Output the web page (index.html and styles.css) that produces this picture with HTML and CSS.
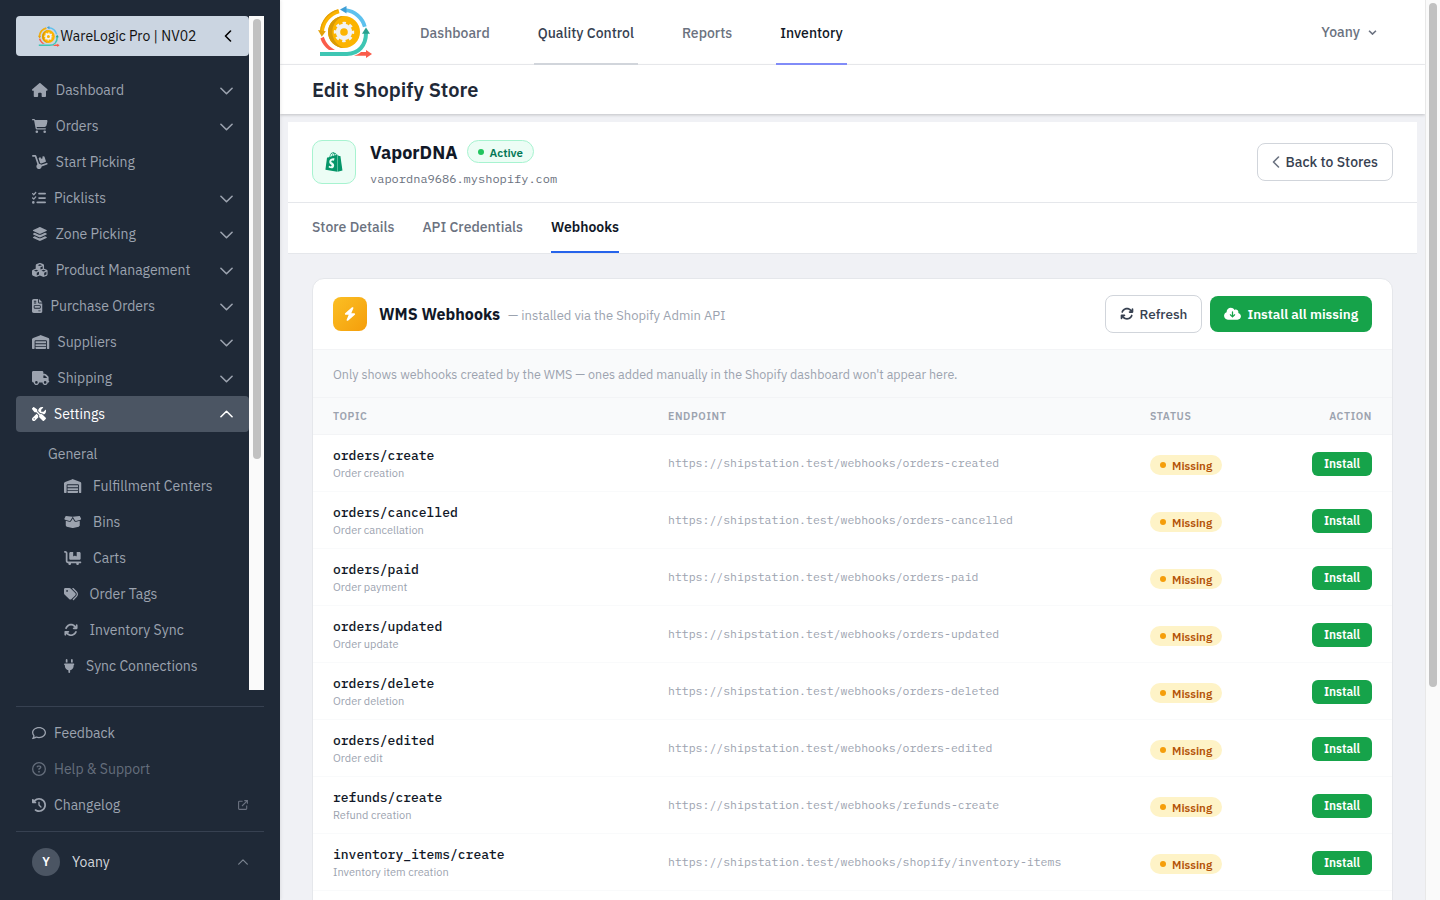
FILE: index.html
```html
<!DOCTYPE html>
<html lang="en">
<head>
    <meta charset="UTF-8">
    <title>Edit Shopify Store</title>
    <link rel="stylesheet" href="styles.css">
</head>
<body>
    <!-- icon sprite -->
    <svg class="sprite">
        <symbol id="i-house" viewBox="0 0 576 512"><path d="M575.8 255.5c0 18-15 32.1-32 32.1h-32l.7 160.2c0 2.7-.2 5.4-.5 8.1V472c0 22.1-17.9 40-40 40H456c-1.1 0-2.2 0-3.3-.1c-1.4 .1-2.8 .1-4.2 .1H416 392c-22.1 0-40-17.9-40-40V448 384c0-17.7-14.3-32-32-32H256c-17.7 0-32 14.3-32 32v64 24c0 22.1-17.9 40-40 40H160 128.1c-1.5 0-3-.1-4.5-.2c-1.2 .1-2.4 .2-3.6 .2H104c-22.1 0-40-17.9-40-40V360c0-.9 0-1.9 .1-2.8V287.6H32c-18 0-32-14-32-32.1c0-9 3-17 10-24L266.4 8c7-7 15-8 22-8s15 2 21 7L564.8 231.5c8 7 12 15 11 24z"/></symbol>
        <symbol id="i-cart" viewBox="0 0 576 512"><path d="M0 24C0 10.7 10.7 0 24 0H69.5c22 0 41.5 12.8 50.6 32h411c26.3 0 45.5 25 38.6 50.4l-41 152.3c-8.5 31.4-37 53.3-69.5 53.3H170.7l5.4 28.5c2.2 11.3 12.1 19.5 23.6 19.5H488c13.3 0 24 10.7 24 24s-10.7 24-24 24H199.7c-34.6 0-64.3-24.6-70.7-58.5L77.4 54.5c-.7-3.8-4-6.5-7.9-6.5H24C10.7 48 0 37.3 0 24zM128 464a48 48 0 1 1 96 0 48 48 0 1 1 -96 0zm336-48a48 48 0 1 1 0 96 48 48 0 1 1 0-96z"/></symbol>
        <symbol id="i-dolly" viewBox="0 0 576 512"><path d="M0 32C0 14.3 14.3 0 32 0h72.9c27.5 0 52 17.6 60.7 43.8L257.7 320c30.1 .5 56.8 14.9 74 37l202.1-67.4c16.8-5.6 34.9 3.5 40.5 20.2s-3.5 34.9-20.2 40.5L352 417.7c-.9 52.2-43.5 94.3-96 94.3c-53 0-96-43-96-96c0-30.8 14.5-58.2 37-75.8L104.9 64H32C14.3 64 0 49.7 0 32zM244.8 134.5c-5.5-16.8 3.7-34.9 20.5-40.3L311 79.4l19.8 60.9 60.9-19.8L371.8 59.6l45.7-14.8c16.8-5.5 34.9 3.7 40.3 20.5l49.4 152.2c5.5 16.8-3.7 34.9-20.5 40.3L334.5 307.2c-16.8 5.5-34.9-3.7-40.3-20.5L244.8 134.5z"/></symbol>
        <symbol id="i-list" viewBox="0 0 512 512"><path d="M152.1 38.2c9.9 8.9 10.7 24 1.8 33.9l-72 80c-4.4 4.9-10.6 7.8-17.2 7.9s-12.9-2.4-17.6-7L7 113C-2.3 103.6-2.3 88.4 7 79s24.6-9.4 33.9 0l22.1 22.1 55.1-61.2c8.9-9.9 24-10.7 33.9-1.8zm0 160c9.9 8.9 10.7 24 1.8 33.9l-72 80c-4.4 4.9-10.6 7.8-17.2 7.9s-12.9-2.4-17.6-7L7 273c-9.4-9.4-9.4-24.6 0-33.9s24.6-9.4 33.9 0l22.1 22.1 55.1-61.2c8.9-9.9 24-10.7 33.9-1.8zM224 96c0-17.7 14.3-32 32-32H480c17.7 0 32 14.3 32 32s-14.3 32-32 32H256c-17.7 0-32-14.3-32-32zm0 160c0-17.7 14.3-32 32-32H480c17.7 0 32 14.3 32 32s-14.3 32-32 32H256c-17.7 0-32-14.3-32-32zM160 416c0-17.7 14.3-32 32-32H480c17.7 0 32 14.3 32 32s-14.3 32-32 32H192c-17.7 0-32-14.3-32-32zM48 368a48 48 0 1 1 0 96 48 48 0 1 1 0-96z"/></symbol>
        <symbol id="i-layers" viewBox="0 0 576 512"><path d="M264.5 5.2c14.9-6.9 32.1-6.9 47 0l218.6 101c8.5 3.9 13.9 12.4 13.9 21.8s-5.4 17.9-13.9 21.8l-218.6 101c-14.9 6.9-32.1 6.9-47 0L45.9 149.8C37.4 145.8 32 137.3 32 128s5.4-17.9 13.9-21.8L264.5 5.2zM476.9 209.6l53.2 24.6c8.5 3.9 13.9 12.4 13.9 21.8s-5.4 17.9-13.9 21.8l-218.6 101c-14.9 6.9-32.1 6.9-47 0L45.9 277.8C37.4 273.8 32 265.3 32 256s5.4-17.9 13.9-21.8l53.2-24.6 152 70.2c23.4 10.8 50.4 10.8 73.8 0l152-70.2zm-152 198.2l152-70.2 53.2 24.6c8.5 3.9 13.9 12.4 13.9 21.8s-5.4 17.9-13.9 21.8l-218.6 101c-14.9 6.9-32.1 6.9-47 0L45.9 405.8C37.4 401.8 32 393.3 32 384s5.4-17.9 13.9-21.8l53.2-24.6 152 70.2c23.4 10.8 50.4 10.8 73.8 0z"/></symbol>
        <symbol id="i-cubes" viewBox="0 0 576 512"><path d="M290.8 48.6l78.4 29.7L288 109.5 206.8 78.3l78.4-29.7c1.8-.7 3.8-.7 5.7 0zM136 92.5V204.7c-1.3 .4-2.6 .8-3.9 1.3l-96 36.4C14.4 250.6 0 271.5 0 294.7V413.9c0 22.2 13.1 42.3 33.5 51.3l96 42.2c14.4 6.3 30.7 6.3 45.1 0L288 457.5l113.5 49.9c14.4 6.3 30.7 6.3 45.1 0l96-42.2c20.3-8.9 33.5-29.1 33.5-51.3V294.7c0-23.3-14.4-44.1-36.1-52.4l-96-36.4c-1.3-.5-2.6-.9-3.9-1.3V92.5c0-23.3-14.4-44.1-36.1-52.4l-96-36.4c-12.8-4.8-26.9-4.8-39.7 0l-96 36.4C150.4 48.4 136 69.3 136 92.5zM392 210.6l-82.4 31.2V152.6L392 121v89.6zM154.8 250.9l78.4 29.7L152 311.7 70.8 280.6l78.4-29.7c1.8-.7 3.8-.7 5.7 0zm18.8 204.4V354.8L256 323.2v95.9l-82.4 36.2zM421.2 250.9c1.8-.7 3.8-.7 5.7 0l78.4 29.7L424 311.7l-81.2-31.1 78.4-29.7zM523.2 421.2l-77.6 34.1V354.8L528 323.2v90.7c0 3.2-1.9 6-4.8 7.3z"/></symbol>
        <symbol id="i-invoice" viewBox="0 0 384 512"><path d="M64 0C28.7 0 0 28.7 0 64V448c0 35.3 28.7 64 64 64H320c35.3 0 64-28.7 64-64V160H256c-17.7 0-32-14.3-32-32V0H64zM256 0V128H384L256 0zM80 64h64c8.8 0 16 7.2 16 16s-7.2 16-16 16H80c-8.8 0-16-7.2-16-16s7.2-16 16-16zm0 64h64c8.8 0 16 7.2 16 16s-7.2 16-16 16H80c-8.8 0-16-7.2-16-16s7.2-16 16-16zm16 96H288c17.7 0 32 14.3 32 32v64c0 17.7-14.3 32-32 32H96c-17.7 0-32-14.3-32-32V256c0-17.7 14.3-32 32-32zm0 32v64H288V256H96zM240 416h64c8.8 0 16 7.2 16 16s-7.2 16-16 16H240c-8.8 0-16-7.2-16-16s7.2-16 16-16z"/></symbol>
        <symbol id="i-warehouse" viewBox="0 0 640 512"><path d="M0 488V171.3c0-26.2 15.9-49.7 40.2-59.4L308.1 4.8c7.6-3.1 16.1-3.1 23.8 0L599.8 111.9c24.3 9.7 40.2 33.3 40.2 59.4V488c0 13.3-10.7 24-24 24H568c-13.3 0-24-10.7-24-24V224c0-17.7-14.3-32-32-32H128c-17.7 0-32 14.3-32 32V488c0 13.3-10.7 24-24 24H24c-13.3 0-24-10.7-24-24zm488 24l-336 0c-13.3 0-24-10.7-24-24V432H512l0 56c0 13.3-10.7 24-24 24zM128 400V336H512v64H128zm0-96V224H512l0 80H128z"/></symbol>
        <symbol id="i-truck" viewBox="0 0 640 512"><path d="M48 0C21.5 0 0 21.5 0 48V368c0 26.5 21.5 48 48 48H64c0 53 43 96 96 96s96-43 96-96H384c0 53 43 96 96 96s96-43 96-96h32c17.7 0 32-14.3 32-32s-14.3-32-32-32V288 256 237.3c0-17-6.7-33.3-18.7-45.3L512 114.7c-12-12-28.3-18.7-45.3-18.7H416V48c0-26.5-21.5-48-48-48H48zM416 160h50.7L544 237.3V256H416V160zM112 416a48 48 0 1 1 96 0 48 48 0 1 1 -96 0zm368-48a48 48 0 1 1 0 96 48 48 0 1 1 0-96z"/></symbol>
        <symbol id="i-tools" viewBox="0 0 512 512"><path d="M78.6 5C69.1-2.4 55.6-1.5 47 7L7 47c-8.5 8.5-9.4 22-2.1 31.6l80 104c4.5 5.9 11.6 9.4 19 9.4h54.1l109 109c-14.7 29-10 65.4 14.3 89.6l112 112c12.5 12.5 32.8 12.5 45.3 0l64-64c12.5-12.5 12.5-32.8 0-45.3l-112-112c-24.2-24.2-60.6-29-89.6-14.3l-109-109V104c0-7.5-3.5-14.5-9.4-19L78.6 5zM19.9 396.1C7.2 408.8 0 426.1 0 444.1C0 481.6 30.4 512 67.9 512c18 0 35.3-7.2 48-19.9L233.7 374.3c-7.8-20.9-9-43.6-3.6-65.1l-61.7-61.7L19.9 396.1zM512 144c0-10.5-1.1-20.7-3.2-30.5c-2.4-11.2-16.1-14.1-24.2-6l-63.9 63.9c-3 3-7.1 4.7-11.3 4.7H352c-8.8 0-16-7.2-16-16V102.6c0-4.2 1.7-8.3 4.7-11.3l63.9-63.9c8.1-8.1 5.2-21.8-6-24.2C388.7 1.1 378.5 0 368 0C288.5 0 224 64.5 224 144l0 .8 85.3 85.3c36-9.1 75.8 .5 104 28.7L429 274.5c49-23 83-72.8 83-130.5zM56 432a24 24 0 1 1 48 0 24 24 0 1 1 -48 0z"/></symbol>
        <symbol id="i-box" viewBox="0 0 640 512"><path d="M58.9 42.1c3-6.1 9.6-9.6 16.3-8.7L320 64 564.8 33.4c6.7-.8 13.3 2.7 16.3 8.7l41.7 83.4c9 17.9-.6 39.6-19.8 45.1L439.6 217.3c-13.9 4-28.8-1.9-36.2-14.3L320 64 236.6 203c-7.4 12.4-22.3 18.3-36.2 14.3L37.1 170.6c-19.3-5.5-28.8-27.2-19.8-45.1L58.9 42.1zM321.1 128l54.9 91.4c14.9 24.8 44.6 36.6 72.5 28.6L576 211.6v167c0 22-15 41.2-36.4 46.6l-204.1 51c-10.2 2.6-20.9 2.6-31 0l-204.1-51C79 419.7 64 400.5 64 378.5v-167L191.6 248c27.8 8 57.6-3.8 72.5-28.6L318.9 128h2.2z"/></symbol>
        <symbol id="i-flatbed" viewBox="0 0 640 512"><path d="M32 0C14.3 0 0 14.3 0 32S14.3 64 32 64H48c8.8 0 16 7.2 16 16V368c0 44.2 35.8 80 80 80h18.7c-1.8 5-2.7 10.4-2.7 16c0 26.5 21.5 48 48 48s48-21.5 48-48c0-5.6-1-11-2.7-16H450.7c-1.8 5-2.7 10.4-2.7 16c0 26.5 21.5 48 48 48s48-21.5 48-48c0-5.6-1-11-2.7-16H608c17.7 0 32-14.3 32-32s-14.3-32-32-32H144c-8.8 0-16-7.2-16-16V80C128 35.8 92.2 0 48 0H32zM192 80V272c0 26.5 21.5 48 48 48H560c26.5 0 48-21.5 48-48V80c0-26.5-21.5-48-48-48H464V176c0 5.9-3.2 11.3-8.5 14.1s-11.5 2.5-16.4-.8L400 163.2l-39.1 26.1c-4.9 3.3-11.2 3.6-16.4 .8s-8.5-8.2-8.5-14.1V32H240c-26.5 0-48 21.5-48 48z"/></symbol>
        <symbol id="i-tags" viewBox="0 0 512 512"><path d="M345 39.1L472.8 168.4c52.4 53 52.4 138.2 0 191.2L360.8 472.9c-9.3 9.4-24.5 9.5-33.9 .2s-9.5-24.5-.2-33.9L438.6 325.9c33.9-34.3 33.9-89.4 0-123.7L310.9 72.9c-9.3-9.4-9.2-24.6 .2-33.9s24.6-9.2 33.9 .2zM0 229.5V80C0 53.5 21.5 32 48 32H197.5c17 0 33.3 6.7 45.3 18.7l168 168c25 25 25 65.5 0 90.5L277.3 442.7c-25 25-65.5 25-90.5 0l-168-168C6.7 262.7 0 246.5 0 229.5zM144 144a32 32 0 1 0 -64 0 32 32 0 1 0 64 0z"/></symbol>
        <symbol id="i-sync" viewBox="0 0 512 512"><path d="M105.1 202.6c7.7-21.8 20.2-42.3 37.8-59.8c62.5-62.5 163.8-62.5 226.3 0L386.3 160H352c-17.7 0-32 14.3-32 32s14.3 32 32 32H463.5c0 0 0 0 0 0h.4c17.7 0 32-14.3 32-32V80c0-17.7-14.3-32-32-32s-32 14.3-32 32v35.2L414.4 97.6c-87.5-87.5-229.3-87.5-316.8 0C73.2 122 55.6 150.7 44.8 181.4c-5.9 16.7 2.9 34.9 19.5 40.8s34.9-2.9 40.8-19.5zM39 289.3c-5 1.5-9.8 4.2-13.7 8.2c-4 4-6.7 8.8-8.1 14c-.3 1.2-.6 2.5-.8 3.8c-.3 1.7-.4 3.4-.4 5.1V432c0 17.7 14.3 32 32 32s32-14.3 32-32V396.9l17.6 17.5 0 0c87.5 87.4 229.3 87.4 316.7 0c24.4-24.4 42.1-53.1 52.9-83.7c5.9-16.7-2.9-34.9-19.5-40.8s-34.9 2.9-40.8 19.5c-7.7 21.8-20.2 42.3-37.8 59.8c-62.5 62.5-163.8 62.5-226.3 0l-.1-.1L125.6 352H160c17.7 0 32-14.3 32-32s-14.3-32-32-32H48.4c-1.6 0-3.2 .1-4.8 .3s-3.1 .5-4.6 1z"/></symbol>
        <symbol id="i-plug" viewBox="0 0 384 512"><path d="M96 0C78.3 0 64 14.3 64 32v96h64V32c0-17.7-14.3-32-32-32zM288 0c-17.7 0-32 14.3-32 32v96h64V32c0-17.7-14.3-32-32-32zM32 160c-17.7 0-32 14.3-32 32s14.3 32 32 32v32c0 77.4 55 142 128 156.8V480c0 17.7 14.3 32 32 32s32-14.3 32-32V412.8C297 398 352 333.4 352 256V224c17.7 0 32-14.3 32-32s-14.3-32-32-32H32z"/></symbol>
        <symbol id="i-comment" viewBox="0 0 512 512"><path d="M123.6 391.3c12.9-9.4 29.6-11.8 44.6-6.4c26.5 9.6 56.2 15.1 87.8 15.1c124.7 0 208-80.5 208-160s-83.3-160-208-160S48 160.5 48 240c0 32 12.4 62.8 35.7 89.2c8.6 9.7 12.8 22.5 11.8 35.5c-1.4 18.1-5.7 34.7-11.3 49.4c17-7.9 31.1-16.7 39.4-22.7zM21.2 431.9c1.8-2.7 3.5-5.4 5.1-8.1c10-16.6 19.5-38.4 21.4-62.9C17.7 326.8 0 285.1 0 240C0 125.1 114.6 32 256 32s256 93.1 256 208s-114.6 208-256 208c-37.1 0-72.3-6.4-104.1-17.9c-11.9 8.7-31.3 20.6-54.3 30.6c-15.1 6.6-32.3 12.6-50.1 16.1c-.8 .2-1.6 .3-2.4 .5c-4.4 .8-8.7 1.5-13.2 1.9c-.2 0-.5 .1-.7 .1c-5.1 .5-10.2 .8-15.3 .8c-6.5 0-12.3-3.9-14.8-9.9c-2.5-6-1.1-12.8 3.4-17.4c4.1-4.2 7.8-8.7 11.3-13.5c1.7-2.3 3.3-4.6 4.8-6.9z"/></symbol>
        <symbol id="i-help" viewBox="0 0 512 512"><path d="M464 256A208 208 0 1 0 48 256a208 208 0 1 0 416 0zM0 256a256 256 0 1 1 512 0A256 256 0 1 1 0 256zm169.8-90.7c7.9-22.3 29.1-37.3 52.8-37.3h58.3c34.9 0 63.1 28.3 63.1 63.1c0 22.6-12.1 43.5-31.7 54.8L280 264.4c-.2 13-10.9 23.6-24 23.6c-13.3 0-24-10.7-24-24V250.5c0-8.6 4.6-16.5 12.1-20.8l44.3-25.4c4.7-2.7 7.6-7.7 7.6-13.1c0-8.4-6.8-15.1-15.1-15.1H222.6c-3.4 0-6.4 2.1-7.5 5.3l-.4 1.2c-4.4 12.5-18.2 19-30.6 14.6s-19-18.2-14.6-30.6l.4-1.2zM224 352a32 32 0 1 1 64 0 32 32 0 1 1 -64 0z"/></symbol>
        <symbol id="i-history" viewBox="0 0 512 512"><path d="M75 75L41 41C25.9 25.9 0 36.6 0 57.9V168c0 13.3 10.7 24 24 24H134.1c21.4 0 32.1-25.9 17-41l-30.8-30.8C155 85.5 203 64 256 64c106 0 192 86 192 192s-86 192-192 192c-40.8 0-78.6-12.7-109.7-34.4c-14.5-10.1-34.4-6.6-44.6 7.9s-6.6 34.4 7.9 44.6C151.2 495 201.7 512 256 512c141.4 0 256-114.6 256-256S397.4 0 256 0C185.3 0 121.3 28.7 75 75zm181 53c-13.3 0-24 10.7-24 24V256c0 6.4 2.5 12.5 7 17l72 72c9.4 9.4 24.6 9.4 33.9 0s9.4-24.6 0-33.9l-65-65V152c0-13.3-10.7-24-24-24z"/></symbol>
        <symbol id="i-bolt" viewBox="0 0 448 512"><path d="M349.4 44.6c5.9-13.7 1.5-29.7-10.6-38.5s-28.6-8-39.9 1.8l-256 224c-10 8.8-13.6 22.9-8.9 35.3S50.7 288 64 288H175.5L98.6 467.4c-5.9 13.7-1.5 29.7 10.6 38.5s28.6 8 39.9-1.8l256-224c10-8.8 13.6-22.9 8.9-35.3s-16.6-20.7-30-20.7H272.5L349.4 44.6z"/></symbol>
        <symbol id="i-cloud" viewBox="0 0 640 512"><path d="M144 480C64.5 480 0 415.5 0 336c0-62.8 40.2-116.2 96.2-135.9c-.1-2.7-.2-5.4-.2-8.1c0-88.4 71.6-160 160-160c59.3 0 111 32.2 138.7 80.2C409.9 102 428.3 96 448 96c53 0 96 43 96 96c0 12.2-2.3 23.8-6.4 34.6C596 238.4 640 290.1 640 352c0 70.7-57.3 128-128 128H144zm79-167l80 80c9.4 9.4 24.6 9.4 33.9 0l80-80c9.4-9.4 9.4-24.6 0-33.9s-24.6-9.4-33.9 0l-39 39V184c0-13.3-10.7-24-24-24s-24 10.7-24 24V318.1l-39-39c-9.4-9.4-24.6-9.4-33.9 0s-9.4 24.6 0 33.9z"/></symbol>
        <symbol id="i-shopify" viewBox="0 0 448 512"><path d="M388.32,104.1a4.66,4.66,0,0,0-4.4-4c-2,0-37.23-.8-37.23-.8s-21.61-20.82-29.62-28.83V503.2L442.76,472S388.72,106.5,388.32,104.1ZM288.65,70.47a116.67,116.67,0,0,0-7.21-17.61C271,32.85,255.42,22,237,22a15,15,0,0,0-4,.4c-.4-.8-1.2-1.2-1.6-2C223.4,11.63,213,7.63,200.58,8c-24,.8-48,18-67.25,48.83-13.61,21.62-24,48.84-26.82,70.06-27.62,8.4-46.83,14.41-47.23,14.81-14,4.4-14.41,4.8-16,18-1.2,10-38,291.82-38,291.82L307.86,504V65.67a41.66,41.66,0,0,0-4.4.4S297.86,67.67,288.65,70.47ZM233.41,87.69c-16,4.8-33.63,10.4-50.84,15.61,4.8-18.82,14.41-37.63,25.62-50,4.4-4.4,10.41-9.61,17.21-12.81C232.21,54.86,233.81,74.48,233.41,87.69ZM200.58,24.44A27.49,27.49,0,0,1,215,28c-6.4,3.2-12.81,8.41-18.81,14.41-15.21,16.42-26.82,42-31.62,66.45-14.42,4.41-28.83,8.81-42,12.81C131.33,83.28,163.75,25.24,200.58,24.44ZM154.15,244.61c1.6,25.61,69.25,31.22,73.25,91.66,2.8,47.64-25.22,80.06-65.65,82.47-48.83,3.2-75.65-25.62-75.65-25.62l10.4-44s26.82,20.42,48.44,18.82c14-.8,19.22-12.41,18.81-20.42-2-33.62-57.24-31.62-60.84-86.86-3.2-46.44,27.22-93.27,94.47-97.68,26-1.6,39.23,4.81,39.23,4.81L221.4,225.39s-17.21-8-37.63-6.4C154.15,221,153.75,239.8,154.15,244.61ZM249.42,82.88c0-12-1.6-29.22-7.21-43.63,18.42,3.6,27.22,24,31.23,36.43Q262.63,78.68,249.42,82.88Z"/></symbol>
        <symbol id="i-down" viewBox="0 0 14 8"><path d="M1 1l6 6 6-6" fill="none" stroke="currentColor" stroke-width="1.7" stroke-linecap="round" stroke-linejoin="round"/></symbol>
        <symbol id="i-down-bold" viewBox="0 0 14 8"><path d="M1.500 1.200l5.500 5.300 5.500-5.300" fill="none" stroke="currentColor" stroke-width="2.600"/></symbol>
        <symbol id="i-up" viewBox="0 0 14 8"><path d="M1 7l6-6 6 6" fill="none" stroke="currentColor" stroke-width="1.7" stroke-linecap="round" stroke-linejoin="round"/></symbol>
        <symbol id="i-left" viewBox="0 0 8 12"><path d="M6.5 1l-5 5 5 5" fill="none" stroke="currentColor" stroke-width="1.6" stroke-linecap="round" stroke-linejoin="round"/></symbol>
        <symbol id="i-external" viewBox="0 0 10 10"><path d="M4.6 1.3H1.4a.8.8 0 0 0-.8.8v6.5c0 .5.4.8.8.8h6.5c.5 0 .8-.3.8-.8V5.6M6.3.6h3.1v3.1M9.2.8L4 6" fill="none" stroke="currentColor" stroke-width="1.1"/></symbol>
        <symbol id="i-logo" viewBox="18 6 55 52">
            <path d="M22 31.500A22.600 22.600 0 0 1 39 11.200" fill="none" stroke="#fcb400" stroke-width="4"/>
            <path d="M20.600 31A24 24 0 0 1 38 9.800" fill="none" stroke="#e3a008" stroke-width="1.200"/>
            <path d="M18 30l7.800 1.200-4 5.600z" fill="#e3a008"/>
            <path d="M45.500 10.200A22.600 22.600 0 0 1 64.800 26.800" fill="none" stroke="#5dc1ee" stroke-width="3.800"/>
            <path d="M40 9.400l6.500-3.400v7.600z" fill="#3f9fd6"/>
            <path d="M20.400 38.400l3.400-1.600C26 43.300 29.600 47 35 50h-6c-4-3-7-6.600-8.600-11.600z" fill="#fa5c4a"/>
            <path d="M54 55.800c2.800-.9 5-2.200 7-3.800h5v-2l6 4-6 4v-2.200z" fill="#fa5c4a"/>
            <path d="M20 54h27C58.500 54 66 45.500 66 33" fill="none" stroke="#3ec6b3" stroke-width="4"/>
            <path d="M62 33.800l4-6.300 4 6.300z" fill="#28a08e"/>
            <circle cx="44" cy="32" r="16" fill="#fcb400"/>
            <path d="M44 16A16 16 0 0 0 44 48A16.800 16.800 0 0 1 44 16z" fill="#d99a06"/>
            <circle cx="44" cy="32" r="6" fill="none" stroke="#f2f2f2" stroke-width="4.400"/>
            <circle cx="44" cy="32" r="8.900" fill="none" stroke="#f2f2f2" stroke-width="2.600" stroke-dasharray="3.400 3.590" stroke-dashoffset="1.700"/>
        </symbol>
    </svg>

    <div class="app">
        <aside class="sidebar">
            <div class="side-scroll">
                <div class="side-content">
                    <div class="brand">
                        <svg class="brand-logo"><use href="#i-logo"/></svg>
                        <span class="brand-name">WareLogic Pro | NV02</span>
                        <svg class="brand-arrow"><use href="#i-left"/></svg>
                    </div>
                    <nav class="menu">
                        <a class="item"><svg class="ic w576"><use href="#i-house"/></svg><span>Dashboard</span><svg class="chev"><use href="#i-down"/></svg></a>
                        <a class="item"><svg class="ic w576"><use href="#i-cart"/></svg><span>Orders</span><svg class="chev"><use href="#i-down"/></svg></a>
                        <a class="item"><svg class="ic w576"><use href="#i-dolly"/></svg><span>Start Picking</span></a>
                        <a class="item"><svg class="ic"><use href="#i-list"/></svg><span>Picklists</span><svg class="chev"><use href="#i-down"/></svg></a>
                        <a class="item"><svg class="ic w576"><use href="#i-layers"/></svg><span>Zone Picking</span><svg class="chev"><use href="#i-down"/></svg></a>
                        <a class="item"><svg class="ic w576"><use href="#i-cubes"/></svg><span>Product Management</span><svg class="chev"><use href="#i-down"/></svg></a>
                        <a class="item"><svg class="ic w384"><use href="#i-invoice"/></svg><span>Purchase Orders</span><svg class="chev"><use href="#i-down"/></svg></a>
                        <a class="item"><svg class="ic w640"><use href="#i-warehouse"/></svg><span>Suppliers</span><svg class="chev"><use href="#i-down"/></svg></a>
                        <a class="item"><svg class="ic w640"><use href="#i-truck"/></svg><span>Shipping</span><svg class="chev"><use href="#i-down"/></svg></a>
                        <a class="item active"><svg class="ic"><use href="#i-tools"/></svg><span>Settings</span><svg class="chev"><use href="#i-up"/></svg></a>
                    </nav>
                    <div class="group">General</div>
                    <nav class="submenu">
                        <a class="item"><svg class="ic w640"><use href="#i-warehouse"/></svg><span>Fulfillment Centers</span></a>
                        <a class="item"><svg class="ic w640"><use href="#i-box"/></svg><span>Bins</span></a>
                        <a class="item"><svg class="ic w640"><use href="#i-flatbed"/></svg><span>Carts</span></a>
                        <a class="item"><svg class="ic"><use href="#i-tags"/></svg><span>Order Tags</span></a>
                        <a class="item"><svg class="ic"><use href="#i-sync"/></svg><span>Inventory Sync</span></a>
                        <a class="item"><svg class="ic w384"><use href="#i-plug"/></svg><span>Sync Connections</span></a>
                    </nav>
                </div>
                <div class="scrollbar"><div class="thumb side-thumb"></div></div>
            </div>
            <div class="side-links">
                <a class="item"><svg class="ic"><use href="#i-comment"/></svg><span>Feedback</span></a>
                <a class="item dim"><svg class="ic"><use href="#i-help"/></svg><span>Help &amp; Support</span></a>
                <a class="item"><svg class="ic"><use href="#i-history"/></svg><span>Changelog</span><svg class="ext"><use href="#i-external"/></svg></a>
            </div>
            <div class="side-user">
                <span class="avatar">Y</span>
                <span class="user-name">Yoany</span>
                <svg class="user-chev"><use href="#i-up"/></svg>
            </div>
        </aside>

        <main class="main">
            <header class="topbar">
                <svg class="logo"><use href="#i-logo"/></svg>
                <nav class="topnav">
                    <a>Dashboard</a>
                    <a class="hover">Quality Control</a>
                    <a>Reports</a>
                    <a class="current">Inventory</a>
                </nav>
                <div class="account">Yoany <svg class="account-chev"><use href="#i-down-bold"/></svg></div>
            </header>
            <div class="titlebar"><h1>Edit Shopify Store</h1></div>

            <section class="store">
                <div class="store-head">
                    <div class="store-icon"><svg><use href="#i-shopify"/></svg></div>
                    <div class="store-info">
                        <div class="store-line"><h2>VaporDNA</h2><span class="pill active-pill"><i></i>Active</span></div>
                        <div class="domain">vapordna9686.myshopify.com</div>
                    </div>
                    <button class="btn back"><svg><use href="#i-left"/></svg>Back to Stores</button>
                </div>
                <div class="tabs">
                    <a>Store Details</a>
                    <a>API Credentials</a>
                    <a class="current">Webhooks</a>
                </div>
            </section>

            <section class="card">
                <div class="card-head">
                    <div class="bolt"><svg><use href="#i-bolt"/></svg></div>
                    <h3>WMS Webhooks</h3>
                    <span class="via">— installed via the Shopify Admin API</span>
                    <button class="btn refresh"><svg><use href="#i-sync"/></svg>Refresh</button>
                    <button class="btn install-all"><svg><use href="#i-cloud"/></svg>Install all missing</button>
                </div>
                <p class="note">Only shows webhooks created by the WMS — ones added manually in the Shopify dashboard won't appear here.</p>
                <table class="hooks">
                    <colgroup><col class="c-topic"><col class="c-endpoint"><col class="c-status"><col></colgroup>
                    <thead>
                        <tr><th>TOPIC</th><th>ENDPOINT</th><th>STATUS</th><th class="right">ACTION</th></tr>
                    </thead>
                    <tbody>
                        <tr><td><b>orders/create</b><small>Order creation</small></td><td class="url">https://shipstation.test/webhooks/orders-created</td><td><span class="pill missing"><i></i>Missing</span></td><td class="right"><button class="install">Install</button></td></tr>
                        <tr><td><b>orders/cancelled</b><small>Order cancellation</small></td><td class="url">https://shipstation.test/webhooks/orders-cancelled</td><td><span class="pill missing"><i></i>Missing</span></td><td class="right"><button class="install">Install</button></td></tr>
                        <tr><td><b>orders/paid</b><small>Order payment</small></td><td class="url">https://shipstation.test/webhooks/orders-paid</td><td><span class="pill missing"><i></i>Missing</span></td><td class="right"><button class="install">Install</button></td></tr>
                        <tr><td><b>orders/updated</b><small>Order update</small></td><td class="url">https://shipstation.test/webhooks/orders-updated</td><td><span class="pill missing"><i></i>Missing</span></td><td class="right"><button class="install">Install</button></td></tr>
                        <tr><td><b>orders/delete</b><small>Order deletion</small></td><td class="url">https://shipstation.test/webhooks/orders-deleted</td><td><span class="pill missing"><i></i>Missing</span></td><td class="right"><button class="install">Install</button></td></tr>
                        <tr><td><b>orders/edited</b><small>Order edit</small></td><td class="url">https://shipstation.test/webhooks/orders-edited</td><td><span class="pill missing"><i></i>Missing</span></td><td class="right"><button class="install">Install</button></td></tr>
                        <tr><td><b>refunds/create</b><small>Refund creation</small></td><td class="url">https://shipstation.test/webhooks/refunds-create</td><td><span class="pill missing"><i></i>Missing</span></td><td class="right"><button class="install">Install</button></td></tr>
                        <tr><td><b>inventory_items/create</b><small>Inventory item creation</small></td><td class="url">https://shipstation.test/webhooks/shopify/inventory-items</td><td><span class="pill missing"><i></i>Missing</span></td><td class="right"><button class="install">Install</button></td></tr>
                    </tbody>
                </table>
            </section>
        </main>
        <div class="scrollbar page-scrollbar"><div class="thumb page-thumb"></div></div>
    </div>
</body>
</html>
```
FILE: styles.css
```css
* { box-sizing: border-box; }
body { margin: 0; height: 900px; overflow: hidden; background: #f0f1f5; color: #111827;
       font-family: "IBM Plex Sans", Roboto, sans-serif; font-size: 14px; line-height: 20px; }
h1, h2, h3, p { margin: 0; }
svg { display: block; flex: none; fill: currentColor; }
button { font-family: inherit; white-space: nowrap; }
.sprite { display: none; }
.app { display: flex; height: 900px; overflow: hidden; }

/* sidebar */
.sidebar { width: 280px; flex: none; padding: 16px; background: #1f2937; color: #9ca3af;
           box-shadow: 1px 0 3px rgba(0,0,0,.08); z-index: 1; }
.side-scroll { display: flex; height: 674px; }
.side-content { width: 233px; }
.brand { height: 40px; margin-bottom: 16px; padding: 0 17px 0 22px; display: flex; align-items: center;
         background: #cbd5e1; color: #111; border-radius: 4px; }
.brand-logo { width: 22px; height: 21px; }
.brand-name { margin-left: .5px; }
.brand-arrow { width: 8px; height: 12px; margin-left: auto; color: #000; }
.item { display: flex; align-items: center; height: 36px; padding: 0 16px; gap: 8px; border-radius: 4px; white-space: nowrap; }
.ic { width: 14px; height: 14px; }
.w384 { width: 10.5px; }
.w576 { width: 15.75px; }
.w640 { width: 17.5px; }
.chev { width: 13px; height: 8px; margin-left: auto; margin-top: 1px; }
.item.active { background: #4b5563; color: #fff; }
.item.active .chev { margin-top: -1px; }
.group { padding: 12px 0 4px 32px; height: 36px; }
.submenu .item { padding-left: 48px; gap: 11.5px; }
.side-links { margin-top: 16px; padding: 8px 0; border-top: 1px solid #374151; }
.dim { color: #656e7c; }
.ext { width: 10px; height: 10px; margin-left: auto; color: #6b7280; }
.side-user { display: flex; align-items: center; padding: 16px; border-top: 1px solid #374151; color: #d1d5db; }
.avatar { width: 28px; height: 28px; margin-right: 12px; border-radius: 50%; background: #4b5563; color: #fff;
          font-size: 12px; font-weight: 600; line-height: 28px; text-align: center; }
.user-chev { width: 10px; height: 6px; margin-left: auto; color: #7b8490; }

.scrollbar { width: 15px; flex: none; background: #fafafa; padding: 3px 4px; }
.thumb { width: 8px; border-radius: 4px; background: #c1c1c1; }
.side-thumb { height: 440px; }
.page-scrollbar { border-left: 1px solid #e8e8e8; padding-left: 3px; }
.page-thumb { height: 684px; }

/* top */
.main { flex: 1; min-width: 0; }
.topbar { height: 65px; display: flex; background: #fff; border-bottom: 1px solid #eeeff2; padding: 0 48px 0 38px; }
.logo { width: 55px; height: 52px; margin-top: 6px; }
.topnav { display: flex; margin-left: 43px; gap: 40px; height: 65px; }
.topnav a { padding: 0 4px; line-height: 66px; font-weight: 500; color: #6b7280; border-bottom: 2px solid transparent; }
.topnav .hover { color: #374151; border-color: #d1d5db; }
.topnav .current { color: #111827; border-color: #818cf8; }
.account { display: flex; align-items: center; gap: 8px; margin-left: auto; font-weight: 500; color: #6b7280; }
.account-chev { width: 9px; height: 5px; }
.titlebar { height: 49px; background: #fff; padding-left: 32px; box-shadow: 0 1px 3px rgba(0,0,0,.2); }
.titlebar h1 { font-size: 20px; line-height: 50px; font-weight: 600; color: #1f2937; }

/* store */
.store { margin: 8px 8px 0; background: #fff; }
.store-head { display: flex; align-items: center; height: 81px; padding: 0 24px; border-bottom: 1px solid #e5e7eb; }
.store-icon { width: 44px; height: 44px; border: 1px solid #a7f3d0; border-radius: 10px; background: #ecfdf5; color: #059669;
              display: flex; align-items: center; justify-content: center; }
.store-icon svg { width: 18px; height: 20px; }
.store-info { margin-left: 14px; padding-top: 2px; }
.store-line { display: flex; align-items: center; gap: 10px; height: 24px; }
.store-line h2 { font-size: 18px; font-weight: 700; line-height: 24px; padding-top: 2px; }
.pill { display: inline-flex; align-items: center; border-radius: 12px; font-size: 11.5px; font-weight: 600; }
.pill i { width: 6px; height: 6px; border-radius: 50%; margin-right: 6px; }
.active-pill { height: 23px; margin-left: -1px; padding: 2px 10px 0; border: 1px solid #a7f3d0; background: #ecfdf5; color: #047857; }
.active-pill i { background: #22c55e; margin-top: -2px; }
.domain { margin-top: 7px; font: 12px/16px "IBM Plex Mono", "Liberation Mono", monospace; color: #6b7280; }
.btn { display: flex; align-items: center; gap: 6px; border: 1px solid #d1d5db; border-radius: 8px; background: #fff; color: #374151; font-weight: 500; }
.back { height: 38px; margin-left: auto; padding: 0 14px; font-size: 14px; }
.back svg { width: 8px; height: 12px; color: #6b7280; }
.tabs { display: flex; gap: 28px; height: 51px; padding: 0 24px; border-bottom: 1px solid #e5e7eb; }
.tabs a { height: 50px; line-height: 48px; font-weight: 500; color: #6b7280; }
.tabs .current { font-weight: 600; color: #111827; border-bottom: 2px solid #2563eb; }

/* webhooks */
.card { margin: 24px 32px 0; border: 1px solid #e5e7eb; border-radius: 12px; background: #fff; overflow: hidden; height: 700px; }
.card-head { display: flex; align-items: center; height: 71px; padding: 0 20px; border-bottom: 1px solid #f3f4f6; }
.bolt { width: 34px; height: 34px; border-radius: 8px; background: linear-gradient(135deg, #fbbf24, #f59e0b); color: #fff;
        display: flex; align-items: center; justify-content: center; }
.bolt svg { width: 12px; height: 14px; }
.card-head h3 { margin-left: 12px; font-size: 16px; font-weight: 700; }
.via { margin: 3px 0 0 8px; font-size: 13px; color: #9ca3af; }
.refresh { height: 38px; margin-left: auto; padding: 0 14px; font-size: 13.5px; }
.refresh svg { width: 14px; height: 13.5px; }
.install-all { height: 36px; margin-left: 8px; padding: 0 14px; border: 0; background: #16a34a; color: #fff; font-size: 13.5px; font-weight: 600; }
.install-all svg { width: 17px; height: 13.5px; }
.note { height: 48px; padding: 0 20px; line-height: 49px; font-size: 12.5px; color: #9ca3af; background: #f9fafb; border-bottom: 1px solid #f3f4f6; }
.hooks { width: 100%; table-layout: fixed; border-collapse: separate; border-spacing: 0; }
.c-topic { width: 335px; }
.c-endpoint { width: 482px; }
.c-status { width: 130px; }
th { height: 37px; padding: 0 20px; text-align: left; font-size: 10.5px; line-height: 16px; font-weight: 600; letter-spacing: .63px;
     color: #9ca3af; background: #f9fafb; border-bottom: 1px solid #f3f4f6; }
td { height: 57px; padding: 0 20px; border-bottom: 1px solid #f9fafb; vertical-align: middle; }
th.right, td.right { text-align: right; }
td b { display: block; padding-top: 2px; font: 500 13px/17px "IBM Plex Mono", "Liberation Mono", monospace; }
td small { display: block; padding-top: 1px; font-size: 11px; line-height: 17px; color: #9ca3af; }
.url { font: 11.5px/16px "IBM Plex Mono", "Liberation Mono", monospace; color: #9ca3af; }
.missing { height: 20px; margin-top: 3px; padding: 2px 10px 0; background: #fef3c7; color: #b45309; vertical-align: middle; }
.missing i { background: #f59e0b; margin-top: -2px; }
.install { height: 24px; width: 60px; margin-top: 1px; padding: 0; border: 0; border-radius: 6px; background: #16a34a; color: #fff; font-size: 12px; font-weight: 600; }
```
